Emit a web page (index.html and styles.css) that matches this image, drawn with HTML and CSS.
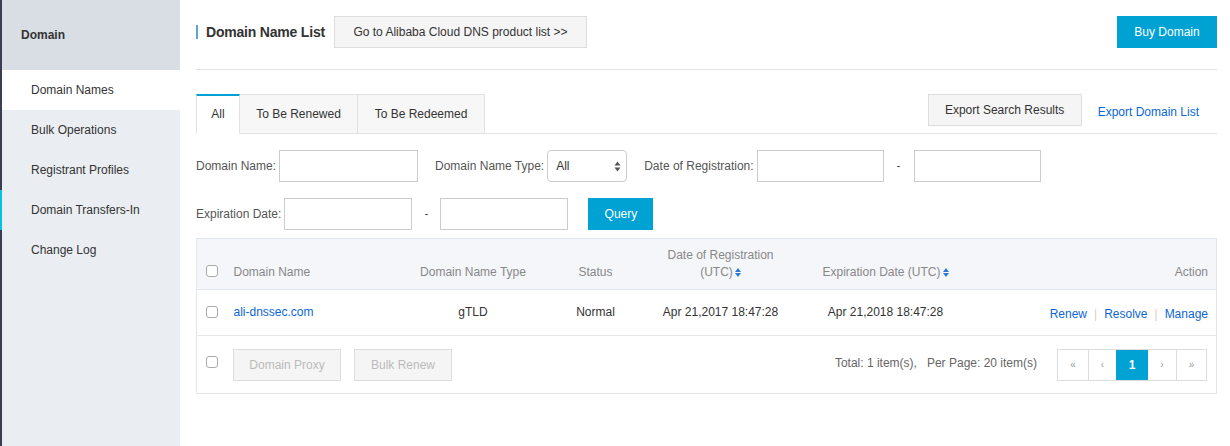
FILE: index.html
```html
<!DOCTYPE html>
<html>
<head>
<meta charset="utf-8">
<link rel="stylesheet" href="styles.css">
</head>
<body>
<div class="page">
  <aside class="sidebar">
    <div class="side-head">Domain</div>
    <ul class="side-menu">
      <li class="active">Domain Names</li>
      <li>Bulk Operations</li>
      <li>Registrant Profiles</li>
      <li class="marked">Domain Transfers-In</li>
      <li>Change Log</li>
    </ul>
  </aside>
  <main class="main">
    <header class="top">
      <div class="top-left">
        <h1 class="title">Domain Name List</h1>
        <button class="btn btn-default btn-go">Go to Alibaba Cloud DNS product list &gt;&gt;</button>
      </div>
      <button class="btn btn-primary btn-buy">Buy Domain</button>
    </header>

    <div class="tabbar">
      <div class="tabs">
        <div class="tab active">All</div>
        <div class="tab">To Be Renewed</div>
        <div class="tab">To Be Redeemed</div>
      </div>
      <div class="tab-actions">
        <button class="btn btn-default btn-export">Export Search Results</button>
        <a class="link export-link">Export Domain List</a>
      </div>
    </div>

    <div class="filters">
      <div class="frow">
        <label class="flabel">Domain Name:</label>
        <div class="input w-name"></div>
        <label class="flabel ml17">Domain Name Type:</label>
        <div class="select"><span>All</span>
          <svg width="7" height="11" viewBox="0 0 7 11"><path d="M3.5 0.5 L6.5 4.5 L0.5 4.5 Z" fill="#555"/><path d="M3.5 10.5 L6.5 6.5 L0.5 6.5 Z" fill="#555"/></svg>
        </div>
        <label class="flabel ml17">Date of Registration:</label>
        <div class="input w-date"></div>
        <span class="dash">-</span>
        <div class="input w-date"></div>
      </div>
      <div class="frow">
        <label class="flabel">Expiration Date:</label>
        <div class="input w-exp"></div>
        <span class="dash">-</span>
        <div class="input w-exp"></div>
        <button class="btn btn-primary btn-query">Query</button>
      </div>
    </div>

    <table class="grid">
      <colgroup>
        <col class="c-cb"><col class="c-name"><col class="c-type"><col class="c-status"><col class="c-reg"><col class="c-exp"><col class="c-act">
      </colgroup>
      <thead>
        <tr>
          <th class="cb"><span class="checkbox"></span></th>
          <th class="left">Domain Name</th>
          <th>Domain Name Type</th>
          <th>Status</th>
          <th>Date of Registration<br>(UTC)<svg class="sort" width="6" height="9" viewBox="0 0 6 9"><path d="M3 0 L6 4 L0 4 Z" fill="#2b7bd6"/><path d="M3 9 L6 5 L0 5 Z" fill="#2b7bd6"/></svg></th>
          <th>Expiration Date (UTC)<svg class="sort" width="6" height="9" viewBox="0 0 6 9"><path d="M3 0 L6 4 L0 4 Z" fill="#2b7bd6"/><path d="M3 9 L6 5 L0 5 Z" fill="#2b7bd6"/></svg></th>
          <th class="right">Action</th>
        </tr>
      </thead>
      <tbody>
        <tr class="row">
          <td class="cb"><span class="checkbox"></span></td>
          <td class="left"><a class="link">ali-dnssec.com</a></td>
          <td>gTLD</td>
          <td>Normal</td>
          <td>Apr 21,2017 18:47:28</td>
          <td>Apr 21,2018 18:47:28</td>
          <td class="right actions"><a class="link">Renew</a><span class="sep">|</span><a class="link">Resolve</a><span class="sep">|</span><a class="link">Manage</a></td>
        </tr>
      </tbody>
      <tfoot>
        <tr>
          <td colspan="7" class="foot">
            <div class="foot-inner">
              <div class="foot-left">
                <span class="checkbox"></span>
                <button class="btn btn-disabled btn-proxy">Domain Proxy</button>
                <button class="btn btn-disabled btn-bulk">Bulk Renew</button>
              </div>
              <div class="foot-right">
                <span class="total">Total: 1 item(s),&nbsp;&nbsp; Per Page: 20 item(s)</span>
                <div class="pager">
                  <span class="pg pg-w">«</span>
                  <span class="pg">‹</span>
                  <span class="pg pg-on">1</span>
                  <span class="pg">›</span>
                  <span class="pg pg-w">»</span>
                </div>
              </div>
            </div>
          </td>
        </tr>
      </tfoot>
    </table>
  </main>
</div>
</body>
</html>
```
FILE: styles.css
```css
* { box-sizing: border-box; }
html, body { margin: 0; padding: 0; background: #fff; }
body {
  font-family: "Liberation Sans", Arial, Helvetica, sans-serif;
  font-size: 12px;
  color: #333;
  width: 1230px;
  height: 446px;
  overflow: hidden;
}
.page { display: flex; height: 446px; }

/* Sidebar */
.sidebar {
  width: 180px;
  flex: none;
  background: #eaedf1;
  border-left: 2px solid #3b3e50;
  height: 446px;
}
.side-head {
  height: 70px;
  background: #d9dee4;
  font-weight: bold;
  font-size: 12px;
  color: #333;
  display: flex;
  align-items: center;
  padding-left: 19px;
}
.side-menu { list-style: none; margin: 0; padding: 0; }
.side-menu li {
  height: 40px;
  line-height: 40px;
  padding-left: 29px;
  color: #333;
  position: relative;
}
.side-menu li.active { background: #fff; }
.side-menu li.marked::before {
  content: "";
  position: absolute;
  left: -2px; top: 0;
  width: 2px; height: 40px;
  background: #00c1de;
}

/* Main */
.main { flex: 1; padding: 0 14px 0 16px; }
.top {
  height: 70px;
  border-bottom: 1px solid #e1e1e1;
  display: flex;
  justify-content: space-between;
  align-items: flex-start;
  padding-top: 16px;
}
.top-left { display: flex; align-items: center; }
.title {
  margin: 0;
  font-size: 14px;
  font-weight: bold;
  color: #333;
  border-left: 2px solid #5aa7df;
  padding-left: 8px;
  line-height: 14px;
  margin-right: 9px;
  letter-spacing: -0.2px;
}
.btn {
  font-family: inherit;
  font-size: 12px;
  height: 32px;
  border: 1px solid #ddd;
  background: #f5f5f5;
  color: #333;
  padding: 0;
  margin: 0;
  cursor: pointer;
  border-radius: 0;
}
.btn-go { width: 253px; }
.btn-primary { background: #00a2d4; border-color: #00a2d4; color: #fff; }
.btn-buy { width: 100px; font-size: 12px; }
.btn-query { width: 65px; margin-left: 20px; }
.btn-disabled { color: #bbb; background: #f5f5f5; border-color: #ddd; }
.btn-proxy { width: 108px; margin-left: 15px; }
.btn-bulk { width: 98px; margin-left: 13px; }
.btn-export { width: 154px; }

/* Tabs */
.tabbar {
  margin-top: 24px;
  display: flex;
  justify-content: space-between;
  align-items: flex-start;
  border-bottom: 1px solid #e1e1e1;
  height: 40px;
}
.tabs { display: flex; }
.tab {
  height: 40px;
  line-height: 38px;
  padding: 0 16px;
  background: #f7f7f7;
  border: 1px solid #e1e1e1;
  border-left: none;
  color: #333;
}
.tab:nth-child(2) { width: 118px; text-align: center; padding: 0; }
.tab:nth-child(3) { width: 127px; text-align: center; padding: 0; }
.tab.active {
  width: 44px;
  padding: 0;
  text-align: center;
  background: #fff;
  border-top: 2px solid #00a2d4;
  border-left: 1px solid #e1e1e1;
  border-bottom-color: #fff;
  line-height: 37px;
}
.tab-actions { display: flex; align-items: center; height: 32px; }
.export-link { margin-left: 16px; margin-right: 18px; margin-top: 3px; }
.link { color: #0b67d6; text-decoration: none; cursor: pointer; }

/* Filters */
.filters { padding-top: 16px; }
.frow { display: flex; align-items: center; height: 32px; margin-bottom: 16px; }
.frow:last-child { margin-bottom: 8px; }
.flabel { color: #555; margin-right: 3px; }
.ml17 { margin-left: 17px; }
.input {
  height: 32px;
  border: 1px solid #ccc;
  background: #fff;
}
.w-name { width: 139px; }
.w-date { width: 127px; }
.w-exp { width: 128px; }
.dash { width: 30px; text-align: center; color: #555; }
.frow .w-exp + .dash { width: 28px; }
.select {
  width: 80px;
  height: 32px;
  border: 1px solid #ccc;
  border-radius: 4px;
  display: flex;
  align-items: center;
  justify-content: space-between;
  padding: 0 5px 0 8px;
  color: #333;
  margin-left: 0;
}

/* Table */
.grid {
  width: 1020px;
  border-collapse: collapse;
  table-layout: fixed;
  border: 1px solid #e3e6eb;
}
.c-cb { width: 37px; }
.c-name { width: 167px; }
.c-type { width: 145px; }
.c-status { width: 100px; }
.c-reg { width: 150px; }
.c-exp { width: 180px; }
.c-act { width: 241px; }
.grid th {
  background: #f5f6fa;
  color: #888;
  font-weight: normal;
  height: 51px;
  text-align: center;
  padding: 0 0 8px 0;
  line-height: 17px;
  border-bottom: 1px solid #e3e6eb;
  vertical-align: bottom;
}
.grid th.cb, .grid td.cb { text-align: left; padding-left: 9px; }
.grid th.cb { padding-bottom: 10px; }
.grid .left { text-align: left; }
.grid .right { text-align: right; padding-right: 8px; }
.grid td {
  height: 46px;
  text-align: center;
  padding: 0 0 2px 0;
  color: #333;
  border-bottom: 1px solid #e3e6eb;
  vertical-align: middle;
}
.row td.actions { padding-top: 2px; padding-bottom: 0; }
.sort { margin-left: 2px; vertical-align: -1px; }
.checkbox {
  display: inline-block;
  width: 12px;
  height: 12px;
  border: 1px solid #aaa;
  border-radius: 3px;
  background: #fff;
  vertical-align: middle;
}
.sep { color: #e8c9c3; margin: 0 7px; }
.grid td.foot { height: 58px; padding: 0 9px; text-align: left; }
.foot-inner { display: flex; justify-content: space-between; align-items: center; }
.foot-left { display: flex; align-items: center; }
.foot-left .checkbox { margin-top: -6px; }
.foot-right { display: flex; align-items: center; }
.total { color: #666; margin-right: 20px; margin-top: -4px; }
.pager { display: flex; border: 1px solid #ddd; height: 32px; }
.pg {
  width: 28px;
  height: 30px;
  line-height: 30px;
  text-align: center;
  color: #999;
  font-size: 10px;
  border-left: 1px solid #ddd;
}
.pg:first-child { border-left: none; }
.pg-w { width: 30px; }
.pg-on { background: #00a2d4; color: #fff; width: 32px; font-size: 12px; font-weight: bold; border-left: none; }
.pg-on + .pg { border-left: none; }
```
